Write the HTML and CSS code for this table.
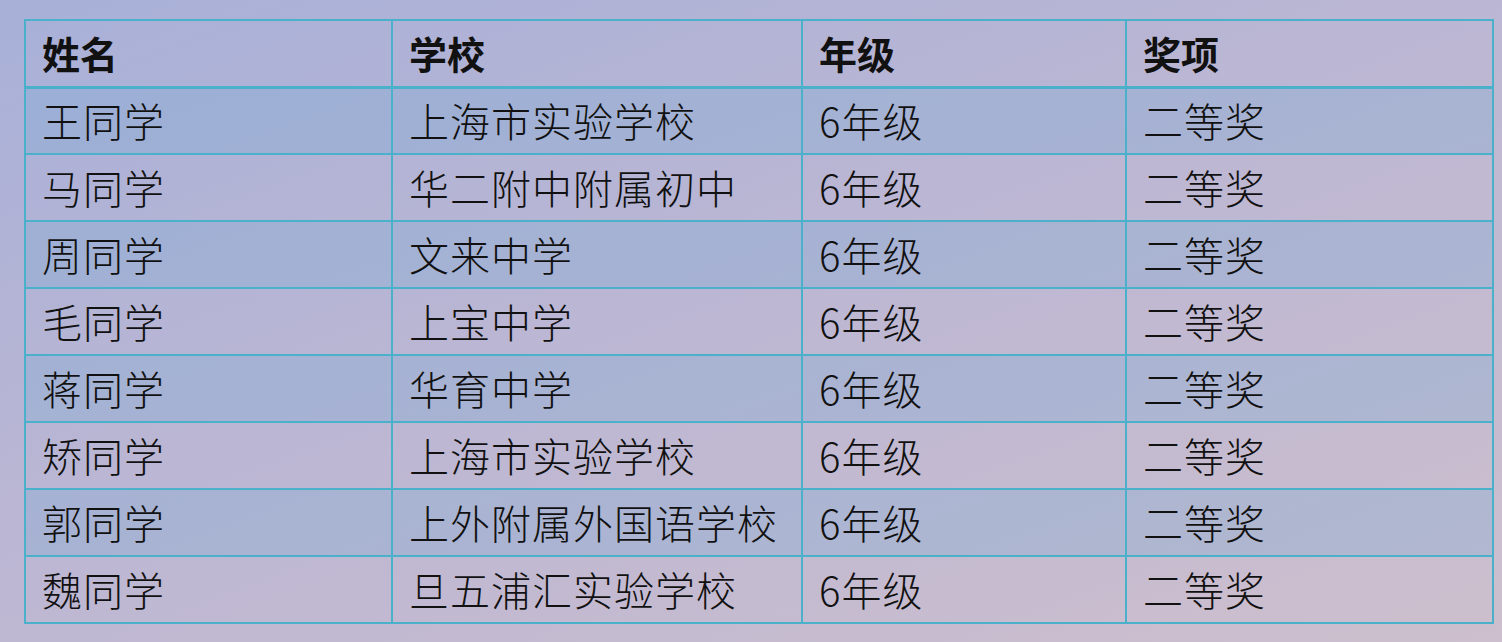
FILE: index.html
```html
<!DOCTYPE html>
<html lang="zh">
<head>
<meta charset="utf-8">
<link rel="stylesheet" href="styles.css">
</head>
<body>
<table class="awards">
  <colgroup>
    <col class="c1"><col class="c2"><col class="c3"><col class="c4">
  </colgroup>
  <thead>
    <tr><th>姓名</th><th>学校</th><th>年级</th><th>奖项</th></tr>
  </thead>
  <tbody>
    <tr><td>王同学</td><td>上海市实验学校</td><td>6年级</td><td>二等奖</td></tr>
    <tr><td>马同学</td><td>华二附中附属初中</td><td>6年级</td><td>二等奖</td></tr>
    <tr><td>周同学</td><td>文来中学</td><td>6年级</td><td>二等奖</td></tr>
    <tr><td>毛同学</td><td>上宝中学</td><td>6年级</td><td>二等奖</td></tr>
    <tr><td>蒋同学</td><td>华育中学</td><td>6年级</td><td>二等奖</td></tr>
    <tr><td>矫同学</td><td>上海市实验学校</td><td>6年级</td><td>二等奖</td></tr>
    <tr><td>郭同学</td><td>上外附属外国语学校</td><td>6年级</td><td>二等奖</td></tr>
    <tr><td>魏同学</td><td>旦五浦汇实验学校</td><td>6年级</td><td>二等奖</td></tr>
  </tbody>
</table>
</body>
</html>
```
FILE: styles.css
```css
html, body {
  margin: 0;
  height: 100%;
}
body {
  background: linear-gradient(160deg, #a8b0d8 0%, #bdb7d3 50%, #cdbfcd 100%);
  padding: 19px 0 0 24px;
  box-sizing: border-box;
  font-family: "Noto Sans CJK SC", "Noto Sans", sans-serif;
  color: #111;
}
.awards {
  border-collapse: collapse;
  table-layout: fixed;
  width: 1468px;
}
.c1 { width: 367px; }
.c2 { width: 410px; }
.c3 { width: 324px; }
.c4 { width: 367px; }
.awards th, .awards td {
  border: 2px solid #4bb1ca;
  height: 67px;
  box-sizing: border-box;
  padding: 0 0 0 16px;
  text-align: left;
  vertical-align: middle;
  line-height: 1;
  white-space: nowrap;
}
.awards th {
  font-size: 38px;
  font-weight: 700;
  border-bottom-width: 3px;
}
.awards td {
  font-size: 40px;
  font-weight: 300;
  letter-spacing: 1px;
  padding-bottom: 2px;
}
.awards tbody tr:nth-child(odd) td {
  background: rgba(125, 172, 212, 0.32);
}
```
